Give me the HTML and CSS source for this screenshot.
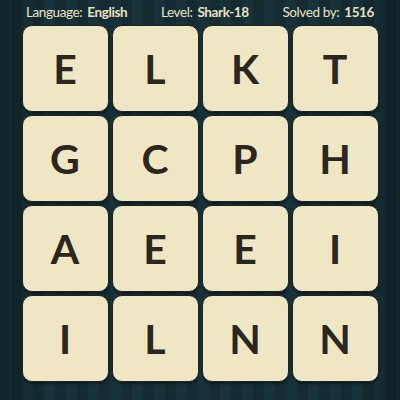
FILE: index.html
```html
<!DOCTYPE html>
<html>
<head>
<meta charset="utf-8">
<link rel="stylesheet" href="styles.css">
</head>
<body>
<div class="page">
  <div class="header">
    <span class="info">Language: <b>English</b></span>
    <span class="info">Level: <b>Shark-18</b></span>
    <span class="info">Solved by: <b>1516</b></span>
  </div>
  <div class="board">
    <div class="tile">E</div><div class="tile">L</div><div class="tile">K</div><div class="tile">T</div>
    <div class="tile">G</div><div class="tile">C</div><div class="tile">P</div><div class="tile">H</div>
    <div class="tile">A</div><div class="tile">E</div><div class="tile">E</div><div class="tile">I</div>
    <div class="tile">I</div><div class="tile">L</div><div class="tile">N</div><div class="tile">N</div>
  </div>
</div>
</body>
</html>
```
FILE: styles.css
```css
html, body {
  margin: 0;
  padding: 0;
}
body {
  width: 400px;
  height: 400px;
  overflow: hidden;
  background-color: #152d34;
  background-image:
    linear-gradient(90deg, rgba(0,0,0,0.25) 0, rgba(0,0,0,0) 12%, rgba(0,0,0,0) 88%, rgba(0,0,0,0.25) 100%),
    repeating-linear-gradient(90deg, #173239 0, #173239 11px, #132b31 11px, #132b31 22px);
  font-family: Lato, "Liberation Sans", sans-serif;
}
.page {
  display: flex;
  flex-direction: column;
  align-items: center;
}
.header {
  box-sizing: border-box;
  width: 400px;
  height: 24px;
  padding: 0 26px 0 26px;
  display: flex;
  justify-content: space-between;
  align-items: center;
  color: #e9e2c2;
  font-size: 13.5px;
  letter-spacing: -0.4px;
}
.header b {
  font-weight: 700;
  margin-left: 2px;
}
.board {
  margin-top: 1px;
  width: 357px;
  display: grid;
  grid-template-columns: repeat(4, 1fr);
  gap: 3px;
}
.tile {
  box-sizing: border-box;
  height: 87px;
  background: #efe7c3;
  border: 1.5px solid #1a2424;
  border-radius: 10px;
  box-shadow: 0 2px 2px rgba(0,0,0,0.35);
  display: flex;
  align-items: center;
  justify-content: center;
  color: #2c2620;
  font-size: 41px;
  font-weight: 700;
}
```
